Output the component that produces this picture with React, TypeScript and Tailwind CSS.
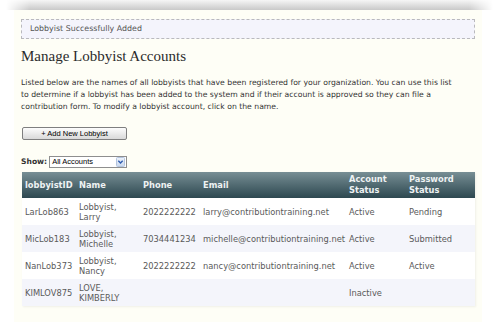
import React from "react";

type Lobbyist = {
  id: string;
  last: string;
  first: string;
  phone: string;
  email: string;
  account: string;
  password: string;
};

const lobbyists: Lobbyist[] = [
  { id: "LarLob863", last: "Lobbyist,", first: "Larry", phone: "2022222222", email: "larry@contributiontraining.net", account: "Active", password: "Pending" },
  { id: "MicLob183", last: "Lobbyist,", first: "Michelle", phone: "7034441234", email: "michelle@contributiontraining.net", account: "Active", password: "Submitted" },
  { id: "NanLob373", last: "Lobbyist,", first: "Nancy", phone: "2022222222", email: "nancy@contributiontraining.net", account: "Active", password: "Active" },
  { id: "KIMLOV875", last: "LOVE,", first: "KIMBERLY", phone: "", email: "", account: "Inactive", password: "" },
];

const SelectArrow: React.FC = () => (
  <svg width="9" height="10" viewBox="0 0 9 10" className="shrink-0">
    <defs>
      <linearGradient id="selg" x1="0" y1="0" x2="0" y2="1">
        <stop offset="0" stopColor="#eef3fb" />
        <stop offset="1" stopColor="#c9d8ee" />
      </linearGradient>
    </defs>
    <rect x="0.5" y="0.5" width="8" height="9" rx="1" fill="url(#selg)" stroke="#b3c4de" />
    <path d="M2.3 3.8 L4.5 6 L6.7 3.8" fill="none" stroke="#2f5cb0" strokeWidth="1.4" />
  </svg>
);

const App: React.FC = () => {
  return (
    <div className="w-[499px] h-[327px] bg-white overflow-hidden font-['DejaVu_Sans',sans-serif]">
      <div className="h-[10px] mx-[6px] bg-gradient-to-b from-[#f6f6f6] to-[#c9c9c9] [mask-image:linear-gradient(to_right,transparent,black_24px,black_calc(100%-24px),transparent)]" />

      <div className="mx-[14px] w-[468px] bg-[#fefef6] px-[7px] pt-[9px] pb-[16px]">
        <div className="h-[20px] border border-dashed border-[#b9b9bd] bg-[#f4f4fc] pl-[8px] flex items-center text-[7.9px] text-[#555]">
          Lobbyist Successfully Added
        </div>

        <h1 className="mt-[8px] font-['Liberation_Serif',serif] text-[15px] leading-[18px] text-[#2b2b2b]">
          Manage Lobbyist Accounts
        </h1>

        <p className="mt-[12px] text-[7.7px] leading-[12px] text-[#333]">
          Listed below are the names of all lobbyists that have been registered for your organization. You can use this list
          <br />
          to determine if a lobbyist has been added to the system and if their account is approved so they can file a
          <br />
          contribution form. To modify a lobbyist account, click on the name.
        </p>

        <button className="mt-[14px] ml-[1px] w-[105px] h-[13px] border border-[#7f7f7f] rounded-[2px] bg-gradient-to-b from-[#fdfdfd] to-[#d9d9d9] font-['Liberation_Sans',sans-serif] text-[7.5px] leading-none text-black flex items-center justify-center">
          + Add New Lobbyist
        </button>

        <div className="mt-[16px] flex items-center gap-[2px]">
          <span className="font-bold text-[7.6px] text-[#333]">Show:</span>
          <div className="w-[78px] h-[12px] border border-[#8e8e8e] bg-white flex items-center justify-between pl-[2px] pr-[1px] font-['Liberation_Sans',sans-serif] text-[7.5px] text-black">
            <span>All Accounts</span>
            <SelectArrow />
          </div>
        </div>

        <table className="mt-[4px] ml-[1px] w-[453px] table-fixed border-collapse text-[8.3px] leading-[10px] text-[#5a5a5a] shadow-[1px_1px_2px_rgba(0,0,0,0.06)]">
          <colgroup>
            <col className="w-[54px]" />
            <col className="w-[64px]" />
            <col className="w-[60px]" />
            <col className="w-[146px]" />
            <col className="w-[60px]" />
            <col className="w-[69px]" />
          </colgroup>
          <thead>
            <tr className="h-[26px] bg-gradient-to-b from-[#788f95] to-[#2d4850] text-[#eef2f3] font-bold text-left leading-[11px]">
              <th className="pl-[3px] font-bold">lobbyistID</th>
              <th className="pl-[3px] font-bold">Name</th>
              <th className="pl-[3px] font-bold">Phone</th>
              <th className="pl-[3px] font-bold">Email</th>
              <th className="pl-[3px] font-bold">Account<br />Status</th>
              <th className="pl-[3px] font-bold">Password<br />Status</th>
            </tr>
          </thead>
          <tbody>
            {lobbyists.map((l, i) => (
              <tr key={l.id} className={i % 2 === 0 ? "h-[27px] bg-white" : "h-[27px] bg-[#f4f5fb]"}>
                <td className="pl-[3px]">{l.id}</td>
                <td className="pl-[3px]">{l.last}<br />{l.first}</td>
                <td className="pl-[3px]">{l.phone}</td>
                <td className="pl-[3px] whitespace-nowrap">{l.email}</td>
                <td className="pl-[3px]">{l.account}</td>
                <td className="pl-[3px]">{l.password}</td>
              </tr>
            ))}
          </tbody>
        </table>
      </div>
    </div>
  );
};

export default App;
